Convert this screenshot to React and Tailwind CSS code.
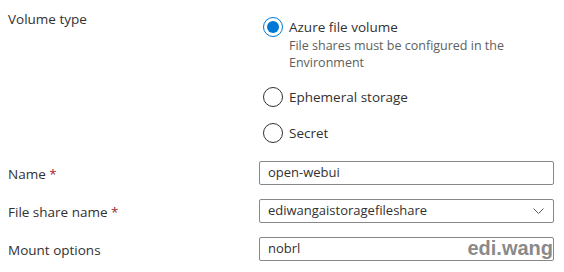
export default function App() {
  const font = { fontFamily: '"Open Sans", "Noto Sans", sans-serif' }

  return (
    <div className="relative w-[564px] h-[272px] bg-white text-[#323130] overflow-hidden" style={font}>
      <div className="pl-2 pr-[10px] pt-[9px]">
        {/* volume type */}
        <div className="flex">
          <div className="w-[251px] text-[13.5px] leading-5">Volume type</div>
          <div className="flex flex-col gap-4 pt-2 pl-1">
            <label className="flex gap-[6px]">
              <span className="w-5 h-5 shrink-0 rounded-full border border-[#0078d4] flex items-center justify-center">
                <span className="w-3 h-3 rounded-full bg-[#0078d4]" />
              </span>
              <span className="flex flex-col">
                <span className="text-[13.5px] leading-5">Azure file volume</span>
                <span className="text-[12.5px] leading-[17px] text-[#605e5c] max-w-[230px]">
                  File shares must be configured in the Environment
                </span>
              </span>
            </label>
            <label className="flex gap-[6px] items-center">
              <span className="w-5 h-5 shrink-0 rounded-full border border-[#323130]" />
              <span className="text-[13.5px] leading-5">Ephemeral storage</span>
            </label>
            <label className="flex gap-[6px] items-center">
              <span className="w-5 h-5 shrink-0 rounded-full border border-[#323130]" />
              <span className="text-[13.5px] leading-5">Secret</span>
            </label>
          </div>
        </div>

        {/* fields */}
        <div className="flex flex-col gap-[14px] mt-[18px]">
          <div className="flex items-center">
            <div className="w-[251px] text-[13.5px] pt-[3px]">
              Name <span className="text-[#a4262c]">*</span>
            </div>
            <div className="flex-1 h-6 border border-[#8a8886] rounded-[2px] px-2 flex items-center text-[13px]">
              open-webui
            </div>
          </div>
          <div className="flex items-center">
            <div className="w-[251px] text-[13.5px] pt-[3px]">
              File share name <span className="text-[#a4262c]">*</span>
            </div>
            <div className="flex-1 h-6 border border-[#8a8886] rounded-[2px] pl-2 pr-[9px] flex items-center justify-between text-[13px]">
              <span>ediwangaistoragefileshare</span>
              <svg width="11" height="6" viewBox="0 0 11 6" fill="none">
                <path d="M0.5 0.5 L5.5 5.5 L10.5 0.5" stroke="#605e5c" strokeWidth="1" />
              </svg>
            </div>
          </div>
          <div className="flex items-center">
            <div className="w-[251px] text-[13.5px] pt-[3px]">Mount options</div>
            <div className="flex-1 h-6 border border-[#8a8886] rounded-[2px] px-2 flex items-center text-[13px]">
              nobrl
            </div>
          </div>
        </div>
      </div>

      {/* watermark */}
      <div
        className="absolute right-[11px] top-[236px] text-[20px] font-bold text-[#7a7a7a]/90 leading-6"
        style={{ fontFamily: '"Liberation Sans", Arial, sans-serif' }}
      >
        edi.wang
      </div>
    </div>
  )
}
